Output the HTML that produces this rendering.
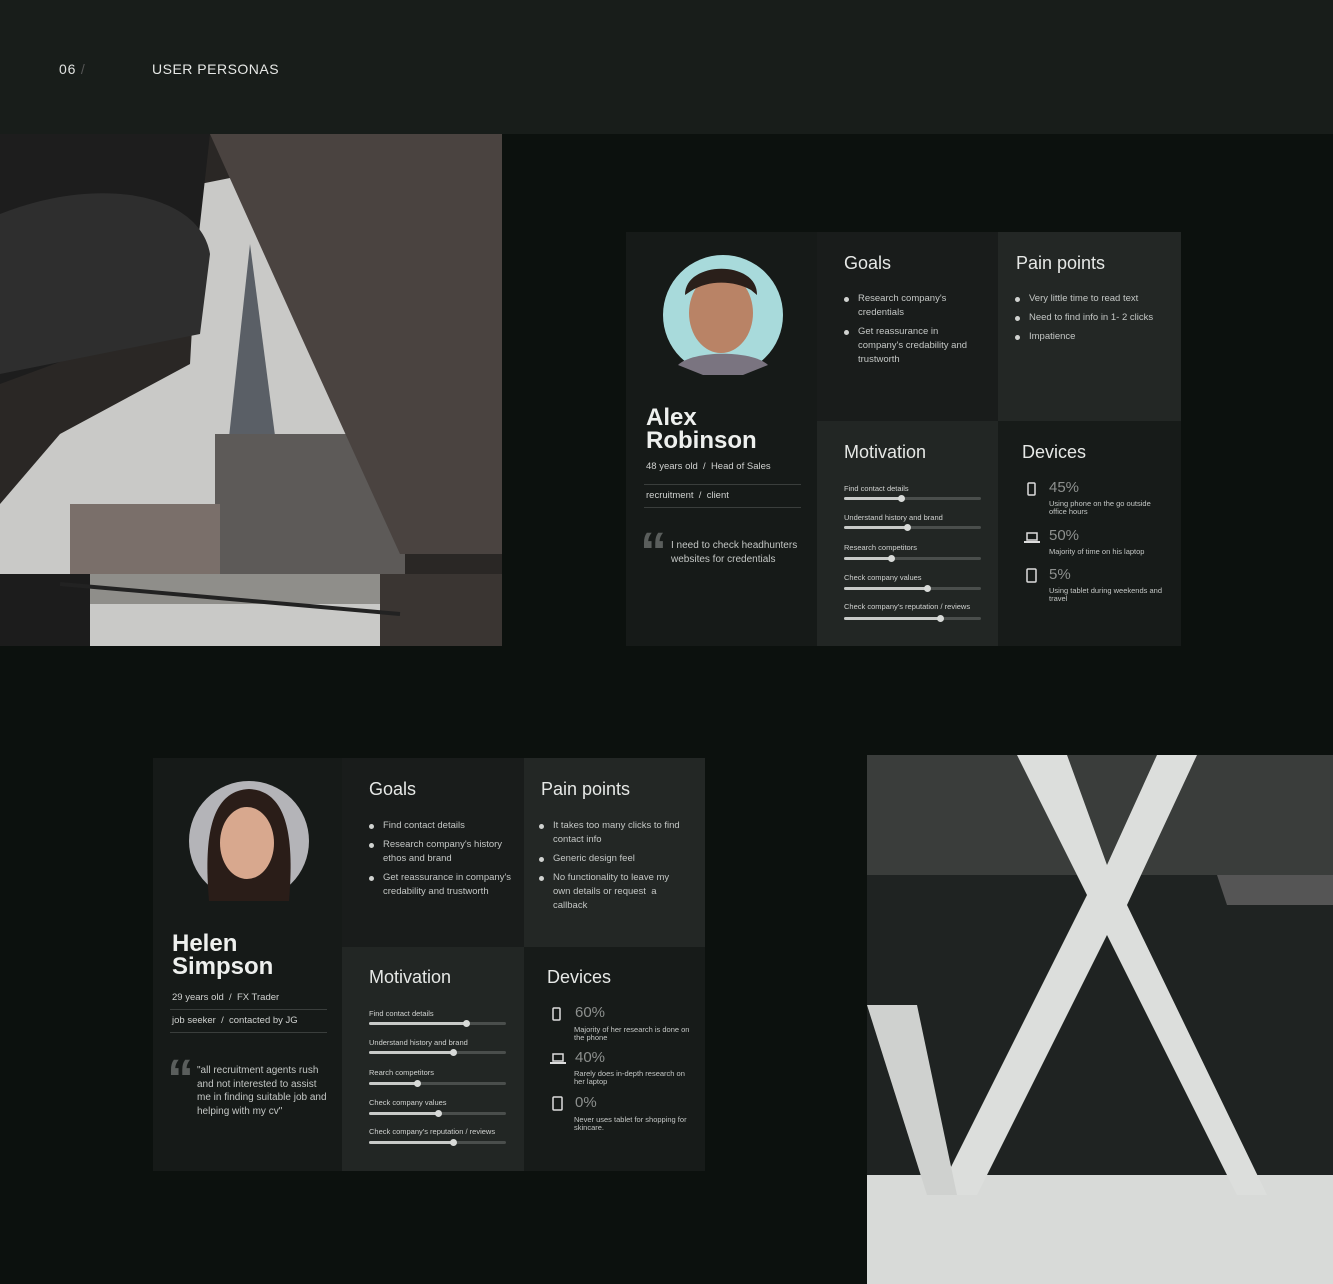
<!DOCTYPE html>
<html><head><meta charset="utf-8"><style>
*{margin:0;padding:0;box-sizing:border-box}
body{width:1333px;height:1284px;background:#0c110e;position:relative;overflow:hidden;font-family:"Liberation Sans",sans-serif;color:#d8dad8}
.hdr{position:absolute;left:0;top:0;width:1333px;height:134px;background:#181d1a}
.abs{position:absolute}
.card{position:absolute;background:#161a18}
.col{position:absolute}
.t{position:absolute;font-size:18px;color:#e6e8e6;white-space:nowrap}
ul{position:absolute;list-style:none;font-size:9.5px;line-height:14px;color:#c4c7c5}
li{position:relative;padding-left:14px;margin-bottom:5px}
li:before{content:"";position:absolute;left:0;top:5px;width:5px;height:5px;border-radius:50%;background:#d0d2d0}
.sl{position:absolute;font-size:7.5px;color:#d0d2d0;white-space:nowrap}
.tr{position:absolute;height:3px;background:#4a4e4c;border-radius:2px;width:137px}
.fi{position:absolute;left:0;top:0;height:3px;background:#c8cac8;border-radius:2px}
.kn{position:absolute;top:-2px;width:7px;height:7px;border-radius:50%;background:#d8dad8;margin-left:-3px}
.pct{position:absolute;font-size:15px;color:#8d908e}
.dd{position:absolute;font-size:7.5px;line-height:8px;color:#c4c7c5;width:120px}
.name{position:absolute;font-size:24px;font-weight:bold;line-height:23px;color:#eef0ee}
.sm{position:absolute;font-size:9.5px;color:#d0d2d0;white-space:nowrap}
.hr{position:absolute;height:1px;background:#3a3e3c}
.q{position:absolute;font-family:"Liberation Sans",sans-serif;font-size:54px;line-height:40px;color:#5a5e5c;font-weight:bold}
.qt{position:absolute;font-size:10px;line-height:13.5px;color:#c4c7c5}
</style></head><body>
<div class="hdr"></div>
<div class="abs" style="left:59px;top:61px;font-size:14px;letter-spacing:0.8px;color:#e0e2e0">06 <span style="color:#555">/</span></div>
<div class="abs" style="left:152px;top:61px;font-size:14px;letter-spacing:0.5px;color:#e6e8e6">USER PERSONAS</div>

<!-- left photo -->
<svg class="abs" style="left:0;top:134px" width="502" height="512" viewBox="0 0 502 512">
<rect width="502" height="512" fill="#2a2725"/>
<polygon points="200,50 250,40 400,420 400,512 0,512 0,370 60,300 190,230" fill="#c9c9c7"/>
<polygon points="250,110 225,340 280,340" fill="#5a5f66"/>
<rect x="215" y="300" width="190" height="140" fill="#5d5a58"/>
<rect x="70" y="370" width="150" height="70" fill="#7a6f6a"/>
<rect x="80" y="440" width="330" height="30" fill="#8f8e8a"/>
<polygon points="210,0 502,0 502,420 400,420 300,200" fill="#4a4340"/>
<polygon points="0,0 210,0 190,180 0,250" fill="#1d1d1d"/>
<path d="M0,80 C100,40 200,60 210,120 L200,200 L0,240 Z" fill="#2e2e2e"/>
<rect x="0" y="440" width="90" height="72" fill="#1c1c1c"/>
<rect x="380" y="440" width="122" height="72" fill="#3a3532"/>
<path d="M60,450 L400,480" stroke="#222" stroke-width="4"/>
</svg>

<!-- right photo -->
<svg class="abs" style="left:867px;top:755px" width="466" height="529" viewBox="0 0 466 529">
<rect width="466" height="529" fill="#1f2322"/>
<rect x="0" y="0" width="466" height="120" fill="#3a3d3b"/>
<polygon points="0,420 466,420 466,529 0,529" fill="#d8dad8"/>
<polygon points="150,0 200,0 240,110 290,0 330,0 260,150 400,440 370,440 240,180 110,440 70,440 220,140" fill="#dcdedc"/>
<polygon points="0,250 50,250 90,440 60,440" fill="#cfd1cf"/>
<polygon points="350,120 466,120 466,150 360,150" fill="#555"/>
</svg>

<!-- card 1 -->
<div class="card" style="left:626px;top:232px;width:555px;height:414px">
 <div class="col" style="left:191px;top:0;width:181px;height:189px;background:#191c1b"></div>
 <div class="col" style="left:372px;top:0;width:183px;height:189px;background:#232725"></div>
 <div class="col" style="left:191px;top:189px;width:181px;height:225px;background:#222624"></div>
 <div class="col" style="left:372px;top:189px;width:183px;height:225px;background:#171b19"></div>
 <svg class="abs" style="left:37px;top:23px" width="120" height="120"><circle cx="60" cy="60" r="60" fill="#a8dadb"/><ellipse cx="58" cy="58" rx="32" ry="40" fill="#b98366"/><path d="M22,40 C22,5 95,5 94,40 L88,35 C70,25 45,25 28,36Z" fill="#2a1f1a"/><path d="M15,110 C30,95 90,95 105,110 L80,120 L40,120Z" fill="#7a7480"/></svg>
 <div class="name" style="left:20px;top:174px">Alex<br>Robinson</div>
 <div class="sm" style="left:20px;top:229px">48 years old &nbsp;/&nbsp; Head of Sales</div>
 <div class="hr" style="left:18px;top:252px;width:157px"></div>
 <div class="sm" style="left:20px;top:258px">recruitment &nbsp;/&nbsp; client</div>
 <div class="hr" style="left:18px;top:275px;width:157px"></div>
 <div class="q" style="left:14px;top:300px">“</div>
 <div class="qt" style="left:45px;top:307px;width:135px">I need to check headhunters websites for credentials</div>

 <div class="t" style="left:218px;top:21px">Goals</div>
 <ul style="left:218px;top:60px;width:140px"><li>Research company's credentials</li><li>Get reassurance in company's credability and trustworth</li></ul>
 <div class="t" style="left:390px;top:21px">Pain points</div>
 <ul style="left:389px;top:60px;width:170px"><li>Very little time to read text</li><li>Need to find info in 1- 2 clicks</li><li>Impatience</li></ul>

 <div class="t" style="left:218px;top:210px">Motivation</div>
 <div class="sl" style="left:218px;top:252px">Find contact details</div><div class="tr" style="left:218px;top:265px"><div class="fi" style="width:57px"></div><div class="kn" style="left:57px"></div></div>
 <div class="sl" style="left:218px;top:281px">Understand history and brand</div><div class="tr" style="left:218px;top:294px"><div class="fi" style="width:63px"></div><div class="kn" style="left:63px"></div></div>
 <div class="sl" style="left:218px;top:311px">Research competitors</div><div class="tr" style="left:218px;top:325px"><div class="fi" style="width:47px"></div><div class="kn" style="left:47px"></div></div>
 <div class="sl" style="left:218px;top:341px">Check company values</div><div class="tr" style="left:218px;top:355px"><div class="fi" style="width:83px"></div><div class="kn" style="left:83px"></div></div>
 <div class="sl" style="left:218px;top:370px">Check company's reputation / reviews</div><div class="tr" style="left:218px;top:385px"><div class="fi" style="width:96px"></div><div class="kn" style="left:96px"></div></div>

 <div class="t" style="left:396px;top:210px">Devices</div>
 <svg class="abs" style="left:401px;top:250px" width="10" height="14"><rect x="1" y="1" width="7" height="12" rx="1" fill="none" stroke="#ddd" stroke-width="1.5"/></svg>
 <div class="pct" style="left:423px;top:247px">45%</div><div class="dd" style="left:423px;top:268px">Using phone on the go outside office hours</div>
 <svg class="abs" style="left:398px;top:300px" width="16" height="12"><rect x="3" y="1" width="10" height="7" fill="none" stroke="#ddd" stroke-width="1.5"/><rect x="0" y="9" width="16" height="2" fill="#ddd"/></svg>
 <div class="pct" style="left:423px;top:295px">50%</div><div class="dd" style="left:423px;top:316px">Majority of time on his laptop</div>
 <svg class="abs" style="left:400px;top:336px" width="12" height="15"><rect x="1" y="1" width="9" height="13" rx="1" fill="none" stroke="#ddd" stroke-width="1.5"/></svg>
 <div class="pct" style="left:423px;top:334px">5%</div><div class="dd" style="left:423px;top:355px">Using tablet during weekends and travel</div>
</div>

<!-- card 2 -->
<div class="card" style="left:153px;top:758px;width:552px;height:413px">
 <div class="col" style="left:189px;top:0;width:182px;height:189px;background:#191c1b"></div>
 <div class="col" style="left:371px;top:0;width:181px;height:189px;background:#232725"></div>
 <div class="col" style="left:189px;top:189px;width:182px;height:224px;background:#222624"></div>
 <div class="col" style="left:371px;top:189px;width:181px;height:224px;background:#171b19"></div>
 <svg class="abs" style="left:36px;top:23px" width="120" height="120"><circle cx="60" cy="60" r="60" fill="#b4b4b8"/><path d="M20,120 C15,60 20,10 60,8 C100,10 105,60 100,120Z" fill="#2a1d18"/><ellipse cx="58" cy="62" rx="27" ry="36" fill="#d8a88e"/></svg>
 <div class="name" style="left:19px;top:174px">Helen<br>Simpson</div>
 <div class="sm" style="left:19px;top:234px">29 years old &nbsp;/&nbsp; FX Trader</div>
 <div class="hr" style="left:17px;top:251px;width:157px"></div>
 <div class="sm" style="left:19px;top:257px">job seeker &nbsp;/&nbsp; contacted by JG</div>
 <div class="hr" style="left:17px;top:274px;width:157px"></div>
 <div class="q" style="left:14px;top:301px">“</div>
 <div class="qt" style="left:44px;top:306px;width:135px">"all recruitment agents rush and not interested to assist me in finding suitable job and helping with my cv"</div>

 <div class="t" style="left:216px;top:21px">Goals</div>
 <ul style="left:216px;top:61px;width:150px"><li>Find contact details</li><li>Research company's history ethos and brand</li><li>Get reassurance in company's credability and trustworth</li></ul>
 <div class="t" style="left:388px;top:21px">Pain points</div>
 <ul style="left:386px;top:61px;width:150px"><li>It takes too many clicks to find contact info</li><li>Generic design feel</li><li>No functionality to leave my own details or request &nbsp;a callback</li></ul>

 <div class="t" style="left:216px;top:209px">Motivation</div>
 <div class="sl" style="left:216px;top:251px">Find contact details</div><div class="tr" style="left:216px;top:264px"><div class="fi" style="width:97px"></div><div class="kn" style="left:97px"></div></div>
 <div class="sl" style="left:216px;top:280px">Understand history and brand</div><div class="tr" style="left:216px;top:293px"><div class="fi" style="width:84px"></div><div class="kn" style="left:84px"></div></div>
 <div class="sl" style="left:216px;top:310px">Rearch competitors</div><div class="tr" style="left:216px;top:324px"><div class="fi" style="width:48px"></div><div class="kn" style="left:48px"></div></div>
 <div class="sl" style="left:216px;top:340px">Check company values</div><div class="tr" style="left:216px;top:354px"><div class="fi" style="width:69px"></div><div class="kn" style="left:69px"></div></div>
 <div class="sl" style="left:216px;top:369px">Check company's reputation / reviews</div><div class="tr" style="left:216px;top:383px"><div class="fi" style="width:84px"></div><div class="kn" style="left:84px"></div></div>

 <div class="t" style="left:394px;top:209px">Devices</div>
 <svg class="abs" style="left:399px;top:249px" width="10" height="14"><rect x="1" y="1" width="7" height="12" rx="1" fill="none" stroke="#ddd" stroke-width="1.5"/></svg>
 <div class="pct" style="left:422px;top:246px">60%</div><div class="dd" style="left:421px;top:268px">Majority of her research is done on the phone</div>
 <svg class="abs" style="left:397px;top:295px" width="16" height="12"><rect x="3" y="1" width="10" height="7" fill="none" stroke="#ddd" stroke-width="1.5"/><rect x="0" y="9" width="16" height="2" fill="#ddd"/></svg>
 <div class="pct" style="left:422px;top:291px">40%</div><div class="dd" style="left:421px;top:312px">Rarely does in-depth research on her laptop</div>
 <svg class="abs" style="left:399px;top:338px" width="12" height="15"><rect x="1" y="1" width="9" height="13" rx="1" fill="none" stroke="#ddd" stroke-width="1.5"/></svg>
 <div class="pct" style="left:422px;top:336px">0%</div><div class="dd" style="left:421px;top:358px">Never uses tablet for shopping for skincare.</div>
</div>
</body></html>
